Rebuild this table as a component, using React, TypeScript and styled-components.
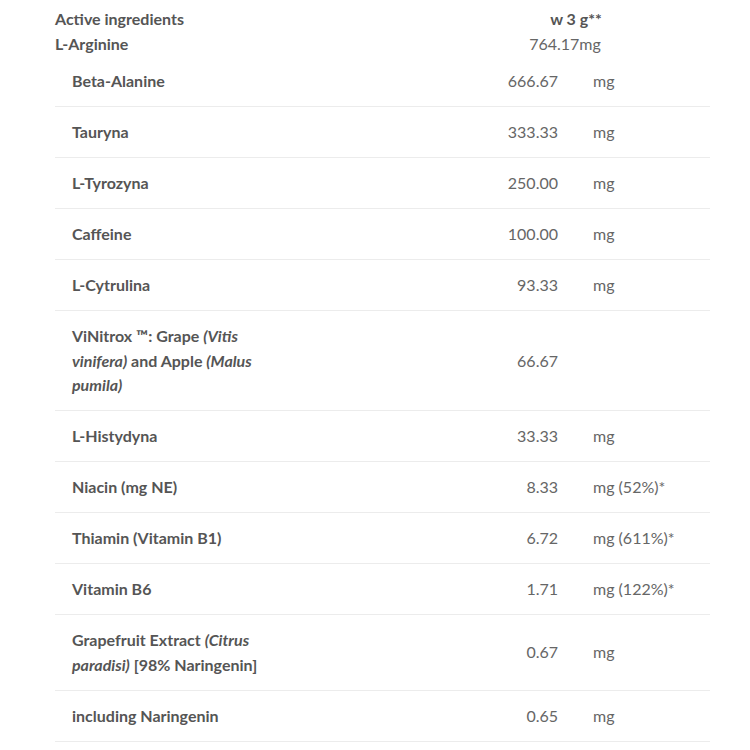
import React from "react";
import styled, { createGlobalStyle } from "styled-components";

const Global = createGlobalStyle`
  html, body { margin: 0; padding: 0; background: #fff; }
  body { font-family: Lato, "Open Sans", sans-serif; color: #555; }
`;

const Page = styled.div`
  width: 750px;
  padding: 7px 40px 0 55px;
  box-sizing: border-box;
`;

const Header = styled.div`
  display: grid;
  grid-template-columns: 1fr 140px 74px;
  font-size: 16px;
  line-height: 24.5px;
`;

const HeadLabel = styled.div`
  font-weight: 700;
  color: #555;
`;

const HeadValue = styled.div<{ $bold?: boolean }>`
  text-align: center;
  font-weight: ${(p) => (p.$bold ? 700 : 400)};
  color: ${(p) => (p.$bold ? "#555" : "#666")};
  padding-left: ${(p) => (p.$bold ? "20px" : "0")};
  padding-right: ${(p) => (p.$bold ? "0" : "2px")};
`;

const Table = styled.div`
  width: 655px;
`;

const Row = styled.div`
  display: grid;
  grid-template-columns: 220px 1fr 152px;
  border-bottom: 1px solid #ececec;
  font-size: 16px;
  line-height: 24.5px;
`;

const Name = styled.div`
  padding: 13px 0 12.5px 17px;
  font-weight: 700;
  color: #555;
  i { font-style: italic; }
`;

const Value = styled.div`
  padding: 13px 0 12.5px;
  display: flex;
  align-items: center;
  justify-content: flex-end;
  color: #666;
`;

const Unit = styled.div`
  padding: 13px 0 12.5px 35px;
  display: flex;
  align-items: center;
  color: #666;
`;

type Item = { name: React.ReactNode; value: string; unit: string };

const items: Item[] = [
  { name: "Beta-Alanine", value: "666.67", unit: "mg" },
  { name: "Tauryna", value: "333.33", unit: "mg" },
  { name: "L-Tyrozyna", value: "250.00", unit: "mg" },
  { name: "Caffeine", value: "100.00", unit: "mg" },
  { name: "L-Cytrulina", value: "93.33", unit: "mg" },
  {
    name: (
      <>
        ViNitrox ™: Grape <i>(Vitis vinifera)</i> and Apple <i>(Malus pumila)</i>
      </>
    ),
    value: "66.67",
    unit: "",
  },
  { name: "L-Histydyna", value: "33.33", unit: "mg" },
  { name: "Niacin (mg NE)", value: "8.33", unit: "mg (52%)*" },
  { name: "Thiamin (Vitamin B1)", value: "6.72", unit: "mg (611%)*" },
  { name: "Vitamin B6", value: "1.71", unit: "mg (122%)*" },
  {
    name: (
      <>
        Grapefruit Extract <i>(Citrus paradisi)</i> [98% Naringenin]
      </>
    ),
    value: "0.67",
    unit: "mg",
  },
  { name: "including Naringenin", value: "0.65", unit: "mg" },
];

export default function App() {
  return (
    <>
      <Global />
      <Page>
        <Header>
          <HeadLabel>Active ingredients</HeadLabel>
          <HeadValue $bold>w 3 g**</HeadValue>
          <div />
          <HeadLabel>L-Arginine</HeadLabel>
          <HeadValue>764.17mg</HeadValue>
          <div />
        </Header>
        <Table>
          {items.map((it, i) => (
            <Row key={i}>
              <Name>{it.name}</Name>
              <Value>{it.value}</Value>
              <Unit>{it.unit}</Unit>
            </Row>
          ))}
        </Table>
      </Page>
    </>
  );
}
